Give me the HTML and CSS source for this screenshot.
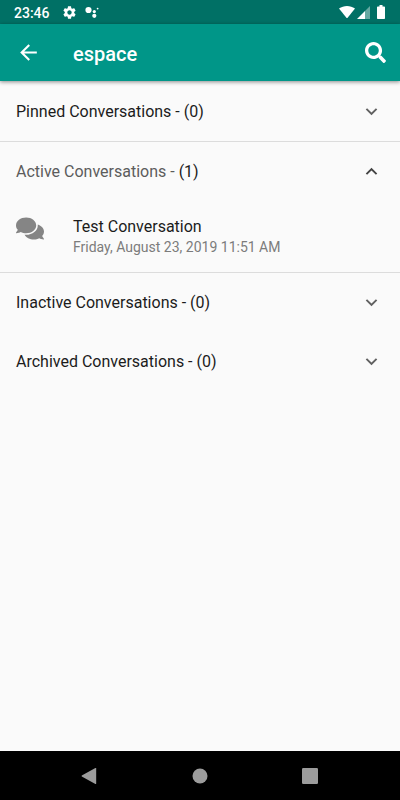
FILE: index.html
```html
<!DOCTYPE html>
<html lang="en">
<head>
<meta charset="utf-8">
<meta name="viewport" content="width=device-width, initial-scale=1">
<title>espace</title>
<link rel="stylesheet" href="styles.css">
</head>
<body>
<div class="status">
  <span class="clock">23:46</span>
  <svg class="gear" viewBox="0 0 24 24" aria-hidden="true"><path d="M19.43 12.98c.04-.32.07-.64.07-.98s-.03-.66-.07-.98l2.11-1.65c.19-.15.24-.42.12-.64l-2-3.46c-.12-.22-.39-.3-.61-.22l-2.49 1c-.52-.4-1.08-.73-1.69-.98l-.38-2.65C14.46 2.18 14.25 2 14 2h-4c-.25 0-.46.18-.49.42l-.38 2.65c-.61.25-1.17.59-1.69.98l-2.49-1c-.23-.09-.49 0-.61.22l-2 3.46c-.13.22-.07.49.12.64l2.11 1.65c-.04.32-.07.65-.07.98s.03.66.07.98l-2.11 1.65c-.19.15-.24.42-.12.64l2 3.46c.12.22.39.3.61.22l2.49-1c.52.4 1.08.73 1.69.98l.38 2.65c.03.24.24.42.49.42h4c.25 0 .46-.18.49-.42l.38-2.65c.61-.25 1.17-.59 1.69-.98l2.49 1c.23.09.49 0 .61-.22l2-3.46c.12-.22.07-.49-.12-.64l-2.11-1.65zM12 15.5c-1.93 0-3.5-1.57-3.5-3.5s1.57-3.5 3.5-3.5 3.5 1.57 3.5 3.5-1.57 3.5-3.5 3.5z"/></svg>
  <svg class="dots" viewBox="0 0 14 12" aria-hidden="true"><circle cx="3.5" cy="4" r="3.1"/><circle cx="9.3" cy="5.6" r="1.6"/><circle cx="9.3" cy="9.8" r="2.1"/><circle cx="12.6" cy="2.6" r=".9"/></svg>
  <span class="signals">
    <svg class="wifi" viewBox="0 0 16 12" aria-hidden="true"><path d="M0 2.6C4.700-.8 11.300-.8 16 2.600L8.600 11.700Q8 12.300 7.400 11.700Z"/></svg>
    <svg class="cell" viewBox="0 0 13 13" aria-hidden="true"><path opacity=".4" d="M13 0V13H8V5Z"/><path d="M8 5V13H0Z"/></svg>
    <svg class="battery" viewBox="0 0 8 14" aria-hidden="true"><path d="M2.500 0h3v1.400H7.200q.8 0 .8.800V13.200q0 .8-.8.800H.8Q0 14 0 13.200V2.200q0-.8.8-.8H2.500Z"/></svg>
  </span>
</div>
<header class="appbar">
  <button class="icon-button" aria-label="Back"><svg class="back" viewBox="0 0 24 24"><path d="M20 11H7.830l5.590-5.590L12 4l-8 8 8 8 1.410-1.410L7.830 13H20v-2z"/></svg></button>
  <h1 class="title">espace</h1>
  <button class="icon-button" aria-label="Search"><svg class="search" viewBox="0 0 512 512"><path d="M505 442.700L405.300 343c-4.500-4.500-10.600-7-17-7H372c27.600-35.300 44-79.700 44-128C416 93.100 322.900 0 208 0S0 93.100 0 208s93.100 208 208 208c48.300 0 92.700-16.400 128-44v16.300c0 6.400 2.500 12.500 7 17l99.700 99.700c9.400 9.400 24.600 9.400 33.900 0l28.300-28.300c9.400-9.400 9.400-24.600.1-34zM208 336c-70.700 0-128-57.200-128-128 0-70.700 57.200-128 128-128 70.700 0 128 57.200 128 128 0 70.700-57.200 128-128 128z"/></svg></button>
</header>
<main class="content">
  <section class="group ruled">
    <button class="group-head" aria-expanded="false"><span>Pinned Conversations - (0)</span><svg class="chevron" viewBox="0 0 24 24"><path d="M16.590 8.590L12 13.170 7.410 8.590 6 10l6 6 6-6z"/></svg></button>
  </section>
  <section class="group ruled">
    <button class="group-head open" aria-expanded="true"><span><span class="name">Active Conversations -</span> (1)</span><svg class="chevron" viewBox="0 0 24 24"><path d="M12 8l-6 6 1.410 1.410L12 10.830l4.590 4.580L18 14z"/></svg></button>
    <a class="conversation" href="#">
      <svg class="comments" viewBox="0 0 576 512" aria-hidden="true"><path d="M416 192c0-88.400-93.100-160-208-160S0 103.600 0 192c0 34.300 14.100 65.900 38 92-13.400 30.200-35.500 54.200-35.800 54.500-2.200 2.300-2.800 5.700-1.500 8.700S4.800 352 8 352c36.600 0 66.900-12.300 88.700-25 32.200 15.700 70.300 25 111.300 25 114.900 0 208-71.600 208-160zm122 220c23.900-26 38-57.700 38-92 0-66.900-53.500-124.200-129.300-148.100.9 6.600 1.300 13.300 1.300 20.100 0 105.900-107.700 192-240 192-10.800 0-21.300-.8-31.700-1.900C207.800 439.600 281.800 480 368 480c41 0 79.100-9.200 111.300-25 21.800 12.700 52.100 25 88.700 25 3.200 0 6.100-1.900 7.300-4.800 1.300-2.900.7-6.300-1.500-8.700-.3-.3-22.400-24.200-35.800-54.500z"/></svg>
      <span class="details"><span class="subject">Test Conversation</span><span class="date">Friday, August 23, 2019 11:51 AM</span></span>
    </a>
  </section>
  <section class="group">
    <button class="group-head" aria-expanded="false"><span>Inactive Conversations - (0)</span><svg class="chevron" viewBox="0 0 24 24"><path d="M16.590 8.590L12 13.170 7.410 8.590 6 10l6 6 6-6z"/></svg></button>
  </section>
  <section class="group">
    <button class="group-head" aria-expanded="false"><span>Archived Conversations - (0)</span><svg class="chevron" viewBox="0 0 24 24"><path d="M16.590 8.590L12 13.170 7.410 8.590 6 10l6 6 6-6z"/></svg></button>
  </section>
</main>
<nav class="system-nav" aria-label="System">
  <button class="nav-button" aria-label="Back"><svg class="nav-icon" viewBox="0 0 16 16"><path d="M13.400 0q.8-.3.8.600V15.400q0 .9-.8.600L-.2 8.500Q-.7 8-.2 7.500Z"/></svg></button>
  <button class="nav-button" aria-label="Home"><svg class="nav-icon" viewBox="0 0 16 16"><circle cx="8" cy="8" r="7.500"/></svg></button>
  <button class="nav-button" aria-label="Overview"><svg class="nav-icon" viewBox="0 0 16 16"><rect width="16" height="16" rx="1.200"/></svg></button>
</nav>
</body>
</html>
```
FILE: styles.css
```css
* { box-sizing: border-box; }

body {
  margin: 0;
  min-height: 100vh;
  display: flex;
  flex-direction: column;
  background: #fafafa;
  color: #1c1c1c;
  font-family: Roboto, sans-serif;
  font-size: 16px;
  line-height: 21px;
}

button {
  border: 0;
  padding: 0;
  background: none;
  color: inherit;
  font: inherit;
}

svg { display: block; flex: none; fill: currentColor; overflow: visible; }

.status {
  display: flex;
  align-items: center;
  height: 24px;
  padding: 0 15px 0 14px;
  background: #007065;
  color: #fff;
}

.clock { font-size: 14px; font-weight: 500; padding-top: 2px; }
.gear { width: 15px; height: 15px; margin-left: 12px; }
.dots { width: 14px; height: 12px; margin-left: 8px; }
.signals { display: flex; align-items: center; margin-left: auto; }
.wifi { width: 16px; height: 12px; }
.cell { width: 13px; height: 13px; margin: 0 7px 0 2px; }
.battery { width: 8px; height: 14px; }

.appbar {
  display: flex;
  align-items: center;
  height: 57px;
  padding: 0 14px 0 16px;
  background: #009688;
  color: #fff;
  box-shadow: 0 1px 4px rgba(0, 0, 0, .45);
}

.back { width: 25px; height: 25px; }
.search { width: 21px; height: 21px; }

.title {
  flex: 1;
  margin: 0 0 0 32px;
  padding-top: 2px;
  font-size: 20px;
  font-weight: 500;
  line-height: 24px;
}

.content { flex: 1; padding-top: 1px; }
.ruled { border-bottom: 1px solid #dcdcdc; }

.group-head {
  display: flex;
  align-items: center;
  justify-content: space-between;
  width: 100%;
  height: 59px;
  padding: 0 17px 0 16px;
  text-align: left;
}

.name { color: #5c5c5c; }
.chevron { width: 23px; height: 23px; color: #616161; }
.open .chevron { color: #444; }

.conversation {
  display: flex;
  align-items: flex-start;
  gap: 29px;
  padding: 15px 16px 14px;
  color: inherit;
  text-decoration: none;
}

.comments { width: 28px; height: 25px; color: #858585; }
.details { display: flex; flex-direction: column; }
.date { font-size: 14px; color: #7c7c7c; }

.system-nav {
  display: flex;
  justify-content: center;
  gap: 30px;
  height: 49px;
  background: #000;
  color: #9c9c9c;
}

.nav-button { display: grid; place-items: center; width: 80px; }
.nav-icon { width: 16px; height: 16px; }
```
